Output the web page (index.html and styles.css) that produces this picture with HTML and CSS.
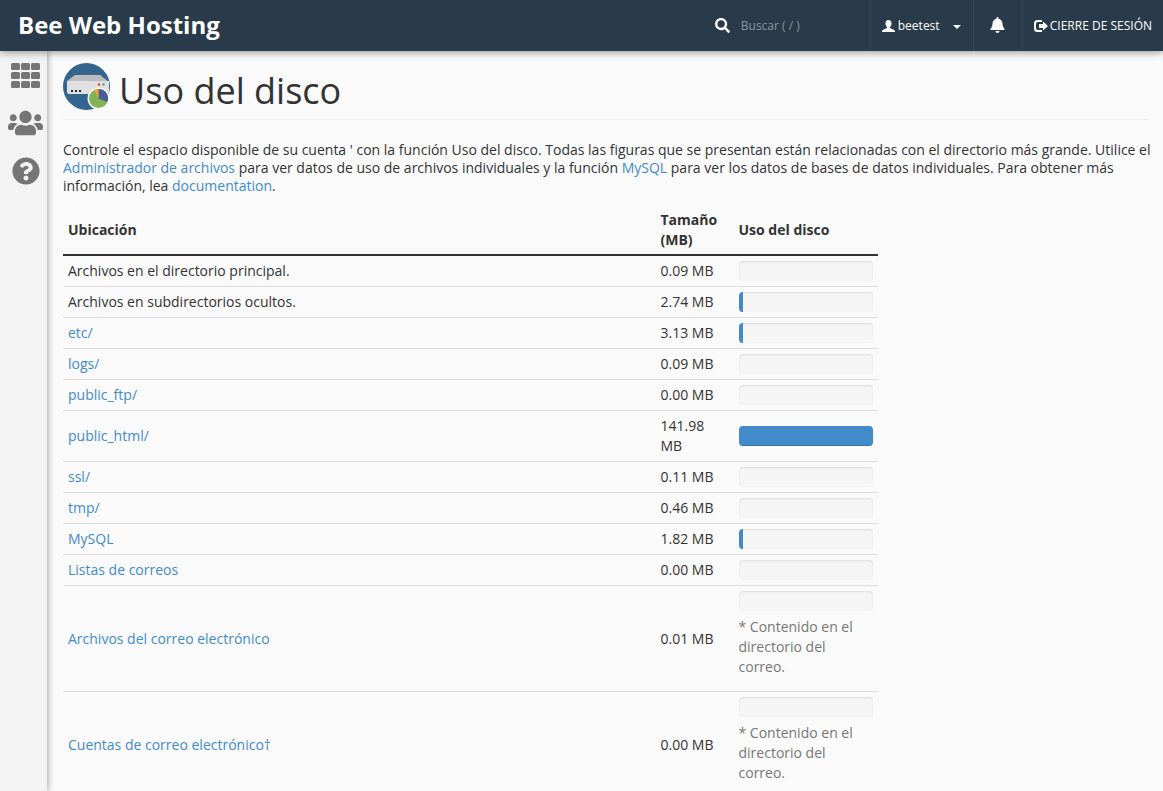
FILE: index.html
```html
<!DOCTYPE html>
<html lang="es">
<head>
<meta charset="utf-8">
<meta name="viewport" content="width=device-width, initial-scale=1">
<title>Uso del disco</title>
<link rel="stylesheet" href="styles.css">
</head>
<body>
<header class="topbar">
  <a class="brand" href="#">Bee Web Hosting</a>
  <div class="search">
    <label class="search-label" for="quick-search" aria-label="Buscar">
      <svg width="15" height="15" viewBox="0 0 512 512" fill="currentColor"><path d="M505 442.700 405.300 343c-4.500-4.500-10.600-7-17-7H372c27.600-35.300 44-79.700 44-128C416 93.100 322.900 0 208 0S0 93.100 0 208s93.100 208 208 208c48.300 0 92.700-16.400 128-44v16.300c0 6.400 2.500 12.500 7 17l99.700 99.700c9.400 9.400 24.600 9.400 33.900 0l28.300-28.300c9.400-9.400 9.400-24.600.1-34zM208 336c-70.700 0-128-57.200-128-128 0-70.700 57.200-128 128-128 70.700 0 128 57.200 128 128 0 70.700-57.200 128-128 128z"/></svg>
    </label>
    <input class="search-input" id="quick-search" type="text" placeholder="Buscar ( / )">
  </div>
  <button class="top-item user-menu" type="button">
    <svg width="13" height="12" viewBox="0 0 13 12" fill="currentColor"><path d="M6.500 0C8.500 0 9.600 1.400 9.500 3.400 9.500 5 8.800 6.300 8 7v1c.6.800 4.600 1.300 5 3.200V12H0v-.8C.4 9.300 4.400 8.800 5 8V7C4.200 6.300 3.500 5 3.500 3.400 3.400 1.400 4.500 0 6.500 0z"/></svg>
    <span class="user-name">beetest</span>
    <svg class="caret" width="8" height="4" viewBox="0 0 8 4" fill="currentColor"><path d="M0 0h8L4 4z"/></svg>
  </button>
  <button class="top-item bell" type="button" aria-label="Notificaciones">
    <svg width="15" height="16" viewBox="0 0 448 512" fill="currentColor"><path d="M224 512c35.300 0 63.900-28.700 63.900-64H160.100c0 35.300 28.600 64 63.900 64zm215.400-149.700c-19.300-20.800-55.500-52-55.500-154.300 0-77.700-54.500-139.900-127.900-155.200V32c0-17.700-14.300-32-32-32s-32 14.300-32 32v20.800C118.600 68.100 64.100 130.300 64.100 208c0 102.300-36.200 133.500-55.500 154.300-6 6.400-8.700 14.100-8.600 21.700.1 16.400 13 32 32.100 32h383.800c19.100 0 32-15.600 32.100-32 0-7.600-2.600-15.300-8.600-21.700z"/></svg>
  </button>
  <a class="top-item logout" href="#">
    <svg width="14" height="12" viewBox="0 0 14 12" fill="currentColor"><path d="M8 0v2H4Q2 2 2 4v4q0 2 2 2h4v2H3.500Q0 12 0 8.500v-5Q0 0 3.500 0zM9 1.500 14 6 9 10.500V8H5V4h4z"/></svg>
    <span>CIERRE DE SESIÓN</span>
  </a>
</header>
<div class="body">
  <nav class="sidebar" aria-label="Principal">
    <a class="side-link" href="#" aria-label="Herramientas">
      <svg width="29" height="25" viewBox="0 0 29 25" fill="currentColor"><rect width="9" height="7" rx="1.500"/><rect x="10" width="9" height="7" rx="1.500"/><rect x="20" width="9" height="7" rx="1.500"/><rect y="9" width="9" height="7" rx="1.500"/><rect x="10" y="9" width="9" height="7" rx="1.500"/><rect x="20" y="9" width="9" height="7" rx="1.500"/><rect y="18" width="9" height="7" rx="1.500"/><rect x="10" y="18" width="9" height="7" rx="1.500"/><rect x="20" y="18" width="9" height="7" rx="1.500"/></svg>
    </a>
    <a class="side-link" href="#" aria-label="Usuarios">
      <svg width="35" height="28" viewBox="0 0 640 512" fill="currentColor"><path d="M96 224c35.300 0 64-28.700 64-64s-28.700-64-64-64-64 28.700-64 64 28.700 64 64 64zm448 0c35.300 0 64-28.700 64-64s-28.700-64-64-64-64 28.700-64 64 28.700 64 64 64zm32 32h-64c-17.600 0-33.500 7.100-45.100 18.600 40.300 22.100 68.900 62 75.100 109.400h66c17.700 0 32-14.300 32-32v-32c0-35.300-28.700-64-64-64zm-256 0c61.900 0 112-50.100 112-112S381.900 32 320 32 208 82.100 208 144s50.100 112 112 112zm76.800 32h-8.300c-20.800 10-43.900 16-68.500 16s-47.600-6-68.500-16h-8.300C179.600 288 128 339.600 128 403.200V432c0 26.500 21.500 48 48 48h288c26.500 0 48-21.500 48-48v-28.800c0-63.600-51.600-115.200-115.200-115.200zm-223.700-13.400C161.500 263.100 145.600 256 128 256H64c-35.300 0-64 28.700-64 64v32c0 17.700 14.300 32 32 32h65.900c6.300-47.400 34.900-87.300 75.200-109.400z"/></svg>
    </a>
    <a class="side-link" href="#" aria-label="Ayuda">
      <svg width="28" height="28" viewBox="0 0 512 512" fill="currentColor"><path d="M504 256c0 137-111 248-248 248S8 393 8 256C8 119.100 119 8 256 8s248 111.100 248 248zM262.700 90c-54.500 0-89.300 23-116.500 63.800-3.500 5.300-2.400 12.400 2.700 16.300l34.700 26.300c5.200 3.900 12.600 3 16.700-2.100 17.900-22.700 30.100-35.800 57.300-35.800 20.400 0 45.700 13.100 45.700 33 0 15-12.400 22.700-32.500 34C247.100 238.500 216 254.900 216 296v4c0 6.600 5.400 12 12 12h56c6.600 0 12-5.400 12-12v-1.300c0-28.500 83.200-29.600 83.200-106.700 0-58-60.200-102-116.500-102zM256 338c-25.400 0-46 20.600-46 46 0 25.400 20.600 46 46 46s46-20.600 46-46c0-25.400-20.600-46-46-46z"/></svg>
    </a>
  </nav>
  <main class="content">
    <h1 class="page-title">
      <svg class="page-icon" width="48" height="48" viewBox="0 0 48 48"><circle cx="23.500" cy="23.500" r="23.500" fill="#34658f"/><path d="M12 12h25l9 7v1H4v-2z" fill="#bcbcbd"/><path d="M4 18h42v11q0 2-2 2H6q-2 0-2-2z" fill="#e0e0e2"/><path d="M8 27h2v2H8zm4 0h2v2h-2zm4 0h2v2h-2z" fill="#222"/><circle cx="36" cy="21.500" r="1.200" fill="#d9453d"/><circle cx="40.500" cy="21.500" r="1.200" fill="#6ea05a"/><circle cx="35.500" cy="35.500" r="11" fill="#fafafa"/><circle cx="35.500" cy="35.500" r="9.500" fill="#82b454"/><path d="M35.500 35.500V26a9.500 9.500 0 0 1 8.900 12.900z" fill="#4b5b96"/><path d="M35.500 35.500V26a9.500 9.500 0 0 0-4.300 1z" fill="#eba52f"/></svg>
      <span>Uso del disco</span>
    </h1>
    <p class="intro">Controle el espacio disponible de su cuenta ' con la función Uso del disco. Todas las figuras que se presentan están relacionadas con el directorio más grande. Utilice el <a href="#">Administrador de archivos</a> para ver datos de uso de archivos individuales y la función <a href="#">MySQL</a> para ver los datos de bases de datos individuales. Para obtener más información, lea <a href="#">documentation</a>.</p>
    <table class="usage">
      <thead>
        <tr><th>Ubicación</th><th class="col-size">Tamaño (MB)</th><th class="col-usage">Uso del disco</th></tr>
      </thead>
      <tbody>
        <tr><td>Archivos en el directorio principal.</td><td>0.09 MB</td><td><div class="progress"></div></td></tr>
        <tr><td>Archivos en subdirectorios ocultos.</td><td>2.74 MB</td><td><div class="progress"><div class="bar" style="width:3%"></div></div></td></tr>
        <tr><td><a href="#">etc/</a></td><td>3.13 MB</td><td><div class="progress"><div class="bar" style="width:3%"></div></div></td></tr>
        <tr><td><a href="#">logs/</a></td><td>0.09 MB</td><td><div class="progress"></div></td></tr>
        <tr><td><a href="#">public_ftp/</a></td><td>0.00 MB</td><td><div class="progress"></div></td></tr>
        <tr><td><a href="#">public_html/</a></td><td>141.98 MB</td><td><div class="progress"><div class="bar" style="width:100%"></div></div></td></tr>
        <tr><td><a href="#">ssl/</a></td><td>0.11 MB</td><td><div class="progress"></div></td></tr>
        <tr><td><a href="#">tmp/</a></td><td>0.46 MB</td><td><div class="progress"></div></td></tr>
        <tr><td><a href="#">MySQL</a></td><td>1.82 MB</td><td><div class="progress"><div class="bar" style="width:3%"></div></div></td></tr>
        <tr><td><a href="#">Listas de correos</a></td><td>0.00 MB</td><td><div class="progress"></div></td></tr>
        <tr><td><a href="#">Archivos del correo electrónico</a></td><td>0.01 MB</td><td><div class="progress"></div><p class="note">* Contenido en el directorio del correo.</p></td></tr>
        <tr><td><a href="#">Cuentas de correo electrónico†</a></td><td>0.00 MB</td><td><div class="progress"></div><p class="note">* Contenido en el directorio del correo.</p></td></tr>
      </tbody>
    </table>
  </main>
</div>
</body>
</html>
```

FILE: styles.css
```css
* { box-sizing: border-box; }

body {
  display: flex;
  flex-direction: column;
  height: 100vh;
  margin: 0;
  overflow: hidden;
  background: #fafafa;
  color: #333;
  font: 14px/18px "Open Sans", "Noto Sans", sans-serif;
}

a { color: #428bca; text-decoration: none; }
.content a:hover { text-decoration: underline; }

/* Top bar */
.topbar {
  display: flex;
  flex: none;
  position: relative;
  z-index: 2;
  height: 51px;
  background: #293a4a;
  box-shadow: 0 1px 8px rgba(0, 0, 0, 0.45);
  color: #fff;
  font-size: 12px;
}

.brand {
  display: flex;
  align-items: center;
  margin-right: auto;
  padding: 0 0 2px 18px;
  color: #fff;
  font-size: 24px;
  font-weight: 700;
}

.search { display: flex; align-items: center; gap: 11px; width: 155px; }
.search-label { display: flex; color: #fff; }

.search-input {
  flex: 1;
  min-width: 0;
  padding: 0;
  border: 0;
  outline: 0;
  background: transparent;
  color: #fff;
  font: inherit;
}

.search-input::placeholder { color: #8b949d; opacity: 1; }

.top-item {
  display: flex;
  align-items: center;
  padding: 0 11px;
  border: 0;
  border-left: 1px solid #33475a;
  background: transparent;
  color: #fff;
  font: inherit;
  white-space: nowrap;
}

.user-menu { gap: 3px; width: 103px; padding-right: 12px; }
.caret { margin: 2px 0 0 auto; }
.bell { justify-content: center; width: 49px; padding-bottom: 1px; }
.logout { gap: 2px; }

/* Side navigation */
.body { display: flex; flex: 1; min-height: 0; }

.sidebar {
  display: flex;
  flex: none;
  flex-direction: column;
  width: 47px;
  background: #f3f3f3;
  box-shadow: 1px 0 6px rgba(0, 0, 0, 0.35);
}

.side-link {
  display: flex;
  align-items: center;
  justify-content: center;
  height: 48px;
  padding-left: 4px;
  color: #757575;
}

/* Content */
.content {
  flex: 1;
  min-width: 0;
  padding: 12px 14px 0 16px;
  overflow-y: auto;
  scrollbar-width: none;
}

.page-title {
  display: flex;
  gap: 8px;
  margin: 0 0 21px;
  padding-bottom: 8px;
  border-bottom: 1px solid #eee;
  font-size: 36px;
  font-weight: 400;
  line-height: 48px;
}

.page-title span { padding-top: 4px; margin-bottom: -4px; }
.page-icon { flex: none; }

.intro { margin: 0 -8px 9px 0; }

.usage {
  width: 75%;
  border-collapse: separate;
  border-spacing: 0;
  table-layout: fixed;
  line-height: 20px;
}

.usage th, .usage td { padding: 5px; text-align: left; vertical-align: middle; }
.usage th { padding: 6px 5px 4px; border-bottom: 2px solid #333; font-weight: 700; }
.usage td { border-bottom: 1px solid #ddd; }
.col-size { width: 78px; }
.col-usage { width: 144px; }

.progress {
  height: 20px;
  overflow: hidden;
  border-radius: 4px;
  background: #f5f5f5;
  box-shadow: inset 0 1px 2px rgba(0, 0, 0, 0.1);
}

.bar {
  height: 100%;
  background: #428bca;
  box-shadow: inset 0 -1px 0 rgba(0, 0, 0, 0.15);
}

.note { margin: 6px 0 9px; color: #777; }
```
